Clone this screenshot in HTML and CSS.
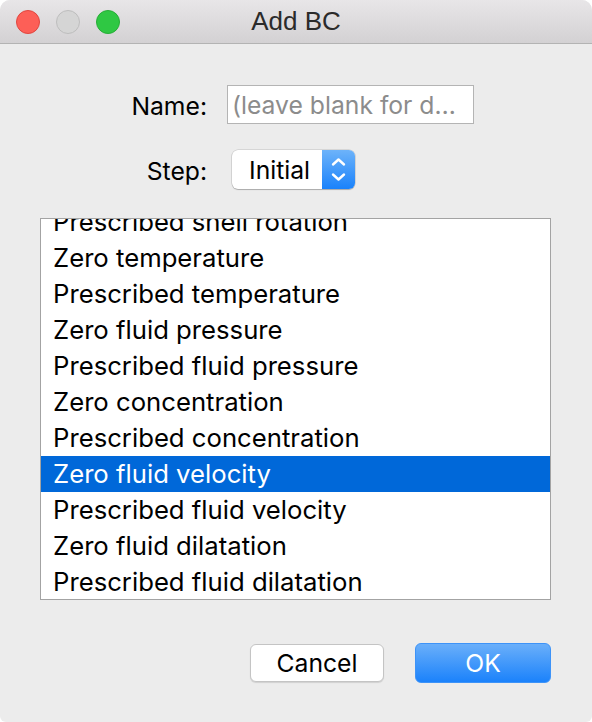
FILE: index.html
```html
<!DOCTYPE html>
<html lang="en">
<head>
<meta charset="utf-8">
<title>Add BC</title>
<link rel="stylesheet" href="styles.css">
</head>
<body>
<div class="window">
  <header class="titlebar">
    <div class="lights">
      <span class="light close"></span>
      <span class="light min"></span>
      <span class="light max"></span>
    </div>
    <div class="title">Add BC</div>
    <div class="spacer"></div>
  </header>
  <main class="content">
    <div class="form">
      <label class="label">Name:</label>
      <div class="textfield"><span class="placeholder">(leave blank for d…</span></div>
      <label class="label">Step:</label>
      <div class="popup">
        <span class="popup-value">Initial</span>
        <span class="popup-arrows">
          <svg width="33" height="39" viewBox="0 0 33 39"><path d="M11 14.5 L16.5 9.5 L22 14.5 M11 24.5 L16.5 29.5 L22 24.5" fill="none" stroke="#fff" stroke-width="2.4" stroke-linecap="round" stroke-linejoin="round"/></svg>
        </span>
      </div>
    </div>
    <div class="listbox">
      <ul class="list">
        <li>Prescribed shell rotation</li>
        <li>Zero temperature</li>
        <li>Prescribed temperature</li>
        <li>Zero fluid pressure</li>
        <li>Prescribed fluid pressure</li>
        <li>Zero concentration</li>
        <li>Prescribed concentration</li>
        <li class="selected">Zero fluid velocity</li>
        <li>Prescribed fluid velocity</li>
        <li>Zero fluid dilatation</li>
        <li>Prescribed fluid dilatation</li>
      </ul>
    </div>
    <div class="buttons">
      <button class="btn">Cancel</button>
      <button class="btn primary">OK</button>
    </div>
  </main>
</div>
</body>
</html>
```

FILE: styles.css
```css
* { box-sizing: border-box; }
html, body { margin: 0; padding: 0; background: #ffffff; }
body { font-family: Inter, "Liberation Sans", sans-serif; color: #000; }

.window {
  width: 592px;
  height: 722px;
  background: #ececec;
  border-radius: 10px 10px 6px 6px;
  overflow: hidden;
  display: flex;
  flex-direction: column;
}

.titlebar {
  height: 44px;
  flex: none;
  display: grid;
  grid-template-columns: 1fr auto 1fr;
  align-items: center;
  background: linear-gradient(#e8e6e8, #d3d1d3);
  border-bottom: 1px solid #b3b3b3;
}
.lights { display: flex; gap: 16px; padding-left: 16px; }
.light { width: 24px; height: 24px; border-radius: 50%; }
.light.close { background: #fd5f57; border: 1px solid #e0463f; }
.light.min { background: #d5d5d5; border: 1px solid #bdbdbd; }
.light.max { background: #2fc843; border: 1px solid #27ad37; }
.title {
  font-family: "Liberation Sans", sans-serif;
  font-size: 26px;
  color: #2b2b2b;
}

.content { padding: 0 41px 0 40px; display: flex; flex-direction: column; }

.form {
  margin-top: 41px;
  display: grid;
  grid-template-columns: 167px auto;
  column-gap: 20px;
  row-gap: 26px;
  align-items: center;
}
.label { justify-self: end; font-size: 24.7px; padding-top: 2px; }
.textfield {
  width: 247px;
  height: 39px;
  background: #fff;
  border: 1px solid #b4b4b4;
  padding-left: 4px;
  display: flex;
  align-items: center;
  font-size: 24.7px;
}
.placeholder { color: #8c8c8c; white-space: nowrap; }
.popup {
  margin-left: 5px;
  width: 123px;
  height: 39px;
  display: flex;
  border-radius: 6px;
  background: #fff;
  box-shadow: 0 0 0 0.5px rgba(0,0,0,0.18), 0 1px 1px rgba(0,0,0,0.2);
  overflow: hidden;
}
.popup-value { flex: 1; padding-left: 17px; display: flex; align-items: center; font-size: 24.7px; }
.popup-arrows { width: 33px; background: linear-gradient(#6db3fa, #1a82fb); display: flex; }

.listbox {
  margin-top: 29px;
  height: 382px;
  background: #fff;
  border: 1px solid #a3a3a3;
  overflow: hidden;
}
.list { list-style: none; margin: -15px 0 0; padding: 0; }
.list li {
  height: 36px;
  line-height: 36px;
  padding-left: 12px;
  font-size: 25.7px;
  white-space: nowrap;
}
.list li.selected { background: #0068d9; color: #fff; }

.buttons {
  margin-top: 43px;
  display: flex;
  justify-content: flex-end;
  align-items: center;
  gap: 31px;
}
.btn {
  font-family: Inter, "Liberation Sans", sans-serif;
  font-size: 24.7px;
  border-radius: 6px;
  padding: 0;
}
.btn:not(.primary) {
  width: 134px; height: 38px;
  background: #fff;
  color: #000;
  border: 1px solid #c4c4c4;
  box-shadow: 0 1px 1px rgba(0,0,0,0.12);
}
.btn.primary {
  width: 136px; height: 40px;
  color: #fff;
  border: 1px solid #3d93f8;
  background: linear-gradient(#6aaffa, #1b82fb);
}
```
